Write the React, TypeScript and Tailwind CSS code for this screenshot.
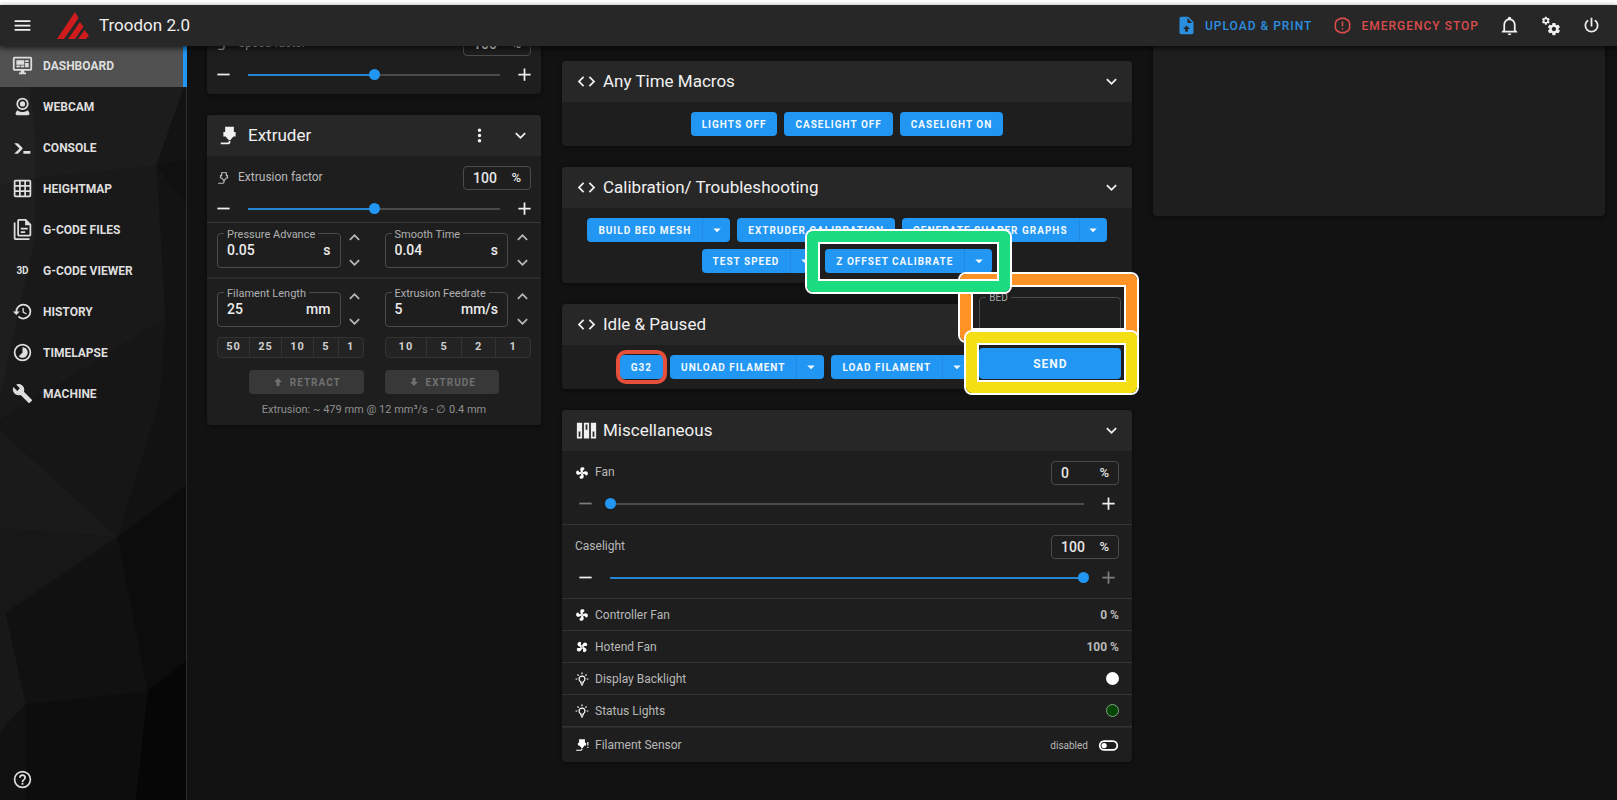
import React, { useState } from 'react';
import clsx from 'clsx';

// Material Design icon outlines, all on a 24x24 grid
const ICONS = {
  menu: 'M3,6H21V8H3V6M3,11H21V13H3V11M3,16H21V18H3V16Z',
  dashboard: 'M21,16V4H3V16H21M21,2A2,2 0 0,1 23,4V16A2,2 0 0,1 21,18H14V20H16V22H8V20H10V18H3C1.89,18 1,17.1 1,16V4C1,2.89 1.89,2 3,2H21M5,6H14V11H5V6M15,6H19V8H15V6M19,9V14H15V9H19M5,12H9V14H5V12M10,12H14V14H10V12Z',
  webcam: 'M12,2A7,7 0 0,1 19,9A7,7 0 0,1 12,16A7,7 0 0,1 5,9A7,7 0 0,1 12,2M12,4A5,5 0 0,0 7,9A5,5 0 0,0 12,14A5,5 0 0,0 17,9A5,5 0 0,0 12,4M12,6A3,3 0 0,1 15,9A3,3 0 0,1 12,12A3,3 0 0,1 9,9A3,3 0 0,1 12,6M6,22A2,2 0 0,1 4,20C4,19.6 4.1,19.3 4.3,19L5.9,16.2C7.6,17.5 9.7,18.2 12,18.2C14.3,18.2 16.4,17.5 18.1,16.2L19.7,19C19.9,19.3 20,19.6 20,20A2,2 0 0,1 18,22H6Z',
  console: 'M13,19V16H21V19H13M8.5,13L2.47,7H6.71L11.67,11.95C12.25,12.54 12.25,13.5 11.67,14.07L6.74,19H2.5L8.5,13Z',
  grid: 'M10,4V8H14V4H10M16,4V8H20V4H16M16,10V14H20V10H16M16,16V20H20V16H16M14,20V16H10V20H14M8,20V16H4V20H8M8,14V10H4V14H8M8,8V4H4V8H8M10,14H14V10H10V14M4,2H20A2,2 0 0,1 22,4V20A2,2 0 0,1 20,22H4C2.92,22 2,21.1 2,20V4A2,2 0 0,1 4,2Z',
  files: 'M16 0H8C6.9 0 6 .9 6 2V18C6 19.1 6.9 20 8 20H20C21.1 20 22 19.1 22 18V6L16 0M20 18H8V2H15V7H20V18M4 4V22H20V24H4C2.9 24 2 23.1 2 22V4H4M10 10V12H18V10H10M10 14V16H15V14H10Z',
  history: 'M13.5,8H12V13L16.28,15.54L17,14.33L13.5,12.25V8M13,3A9,9 0 0,0 4,12H1L4.96,16.03L9,12H6A7,7 0 0,1 13,5A7,7 0 0,1 20,12A7,7 0 0,1 13,19C11.07,19 9.32,18.21 8.06,16.94L6.64,18.36C8.27,20 10.5,21 13,21A9,9 0 0,0 22,12A9,9 0 0,0 13,3',
  timelapse: 'M12,20A8,8 0 0,1 4,12A8,8 0 0,1 12,4A8,8 0 0,1 20,12A8,8 0 0,1 12,20M12,2A10,10 0 0,0 2,12A10,10 0 0,0 12,22A10,10 0 0,0 22,12A10,10 0 0,0 12,2M16.24,7.76C15.07,6.58 13.53,6 12,6V12L7.76,16.24C10.1,18.58 13.9,18.58 16.24,16.24C18.59,13.9 18.59,10.1 16.24,7.76Z',
  wrench: 'M22.7,19L13.6,9.9C14.5,7.6 14,4.9 12.1,3C10.1,1 7.1,0.6 4.7,1.7L9,6L6,9L1.6,4.7C0.4,7.1 0.9,10.1 2.9,12.1C4.8,14 7.5,14.5 9.8,13.6L18.9,22.7C19.3,23.1 19.9,23.1 20.3,22.7L22.6,20.4C23.1,20 23.1,19.3 22.7,19Z',
  help: 'M11,18H13V16H11V18M12,2A10,10 0 0,0 2,12A10,10 0 0,0 12,22A10,10 0 0,0 22,12A10,10 0 0,0 12,2M12,20C7.59,20 4,16.41 4,12C4,7.59 7.59,4 12,4C16.41,4 20,7.59 20,12C20,16.41 16.41,20 12,20M12,6A4,4 0 0,0 8,10H10A2,2 0 0,1 12,8A2,2 0 0,1 14,10C14,12 11,11.75 11,15H13C13,12.75 16,12.5 16,10A4,4 0 0,0 12,6Z',
  upload: 'M14,2H6C4.89,2 4,2.89 4,4V20A2,2 0 0,0 6,22H18C19.11,22 20,21.11 20,20V8L14,2M13.5,16V19H10.5V16H8L12,12L16,16H13.5M13,9V3.5L18.5,9H13Z',
  alert: 'M9,2L3.5,5.2L2,9V15L3.5,18.8L9,22H15L20.5,18.8L22,15V9L20.5,5.2L15,2H9M9.5,4H14.5L18.9,6.6L20,9.5V14.5L18.9,17.4L14.5,20H9.5L5.1,17.4L4,14.5V9.5L5.1,6.6L9.5,4M11,15H13V17H11V15M11,7H13V13H11V7',
  bell: 'M10 21H14C14 22.1 13.1 23 12 23S10 22.1 10 21M21 19V20H3V19L5 17V11C5 7.9 7 5.2 10 4.3V4C10 2.9 10.9 2 12 2S14 2.9 14 4V4.3C17 5.2 19 7.9 19 11V17L21 19M17 11C17 8.2 14.8 6 12 6S7 8.2 7 11V18H17V11Z',
  cogs: 'M15.9,18.45C17.25,18.45 18.35,17.35 18.35,16C18.35,14.65 17.25,13.55 15.9,13.55C14.54,13.55 13.45,14.65 13.45,16C13.45,17.35 14.54,18.45 15.9,18.45M21.1,16.68L22.58,17.84C22.71,17.95 22.75,18.13 22.66,18.29L21.26,20.71C21.17,20.86 21,20.92 20.83,20.86L19.09,20.16C18.73,20.44 18.33,20.67 17.91,20.85L17.64,22.7C17.62,22.87 17.47,23 17.3,23H14.5C14.32,23 14.18,22.87 14.15,22.7L13.89,20.85C13.46,20.67 13.07,20.44 12.71,20.16L10.96,20.86C10.81,20.92 10.62,20.86 10.54,20.71L9.14,18.29C9.05,18.13 9.09,17.95 9.22,17.84L10.7,16.68L10.65,16L10.7,15.31L9.22,14.16C9.09,14.05 9.05,13.86 9.14,13.71L10.54,11.29C10.62,11.13 10.81,11.07 10.96,11.13L12.71,11.84C13.07,11.56 13.46,11.32 13.89,11.15L14.15,9.29C14.18,9.13 14.32,9 14.5,9H17.3C17.47,9 17.62,9.13 17.64,9.29L17.91,11.15C18.33,11.32 18.73,11.56 19.09,11.84L20.83,11.13C21,11.07 21.17,11.13 21.26,11.29L22.66,13.71C22.75,13.86 22.71,14.05 22.58,14.16L21.1,15.31L21.15,16L21.1,16.68M6.69,8.07C7.56,8.07 8.26,7.37 8.26,6.5C8.26,5.63 7.56,4.92 6.69,4.92A1.58,1.58 0 0,0 5.11,6.5C5.11,7.37 5.82,8.07 6.69,8.07M10.03,6.94L11,7.68C11.07,7.75 11.09,7.87 11.03,7.97L10.13,9.53C10.08,9.63 9.96,9.67 9.86,9.63L8.74,9.18L8,9.62L7.81,10.81C7.79,10.92 7.7,11 7.59,11H5.79C5.67,11 5.58,10.92 5.56,10.81L5.4,9.62L4.64,9.18L3.52,9.63C3.41,9.67 3.3,9.63 3.24,9.53L2.34,7.97C2.28,7.87 2.31,7.75 2.39,7.68L3.34,6.94L3.31,6.5L3.34,6.06L2.39,5.32C2.31,5.25 2.28,5.13 2.34,5.03L3.24,3.47C3.3,3.37 3.41,3.33 3.52,3.37L4.63,3.82L5.4,3.38L5.56,2.19C5.58,2.08 5.67,2 5.79,2H7.59C7.7,2 7.79,2.08 7.81,2.19L8,3.38L8.74,3.82L9.86,3.37C9.96,3.33 10.08,3.37 10.13,3.47L11.03,5.03C11.09,5.13 11.07,5.25 11,5.32L10.03,6.06L10.06,6.5L10.03,6.94Z',
  power: 'M16.56,5.44L15.11,6.89C16.84,7.94 18,9.83 18,12A6,6 0 0,1 12,18A6,6 0 0,1 6,12C6,9.83 7.16,7.94 8.88,6.88L7.44,5.44C5.36,6.88 4,9.28 4,12A8,8 0 0,0 12,20A8,8 0 0,0 20,12C20,9.28 18.64,6.88 16.56,5.44M13,3H11V13H13',
  code: 'M14.6,16.6L19.2,12L14.6,7.4L16,6L22,12L16,18L14.6,16.6M9.4,16.6L4.8,12L9.4,7.4L8,6L2,12L8,18L9.4,16.6Z',
  down: 'M7.41,8.58L12,13.17L16.59,8.58L18,10L12,16L6,10L7.41,8.58Z',
  up: 'M7.41,15.41L12,10.83L16.59,15.41L18,14L12,8L6,14L7.41,15.41Z',
  caret: 'M7,10L12,15L17,10H7Z',
  dots: 'M12,16A2,2 0 0,1 14,18A2,2 0 0,1 12,20A2,2 0 0,1 10,18A2,2 0 0,1 12,16M12,10A2,2 0 0,1 14,12A2,2 0 0,1 12,14A2,2 0 0,1 10,12A2,2 0 0,1 12,10M12,4A2,2 0 0,1 14,6A2,2 0 0,1 12,8A2,2 0 0,1 10,6A2,2 0 0,1 12,4Z',
  minus: 'M19,13H5V11H19V13Z',
  plus: 'M19,13H13V19H11V13H5V11H11V5H13V11H19V13Z',
  fan: 'M12,11A1,1 0 0,0 11,12A1,1 0 0,0 12,13A1,1 0 0,0 13,12A1,1 0 0,0 12,11M12.5,2C17,2 17.11,5.57 14.75,6.75C13.76,7.24 13.32,8.29 13.13,9.22C13.61,9.42 14.03,9.73 14.35,10.13C18.05,8.13 22.03,8.92 22.03,12.5C22.03,17 18.46,17.1 17.28,14.73C16.78,13.74 15.72,13.3 14.79,13.11C14.59,13.59 14.28,14 13.88,14.34C15.87,18.03 15.08,22 11.5,22C7,22 6.91,18.42 9.27,17.24C10.25,16.75 10.69,15.71 10.89,14.79C10.4,14.59 9.97,14.27 9.65,13.87C5.96,15.85 2,15.07 2,11.5C2,7 5.56,6.89 6.74,9.26C7.24,10.25 8.29,10.68 9.22,10.87C9.41,10.39 9.73,9.97 10.14,9.65C8.15,5.96 8.94,2 12.5,2Z',
  bulb: 'M20,11H23V13H20V11M1,11H4V13H1V11M13,1V4H11V1H13M4.92,3.5L7.05,5.64L5.63,7.05L3.5,4.93L4.92,3.5M16.95,5.63L19.07,3.5L20.5,4.93L18.37,7.05L16.95,5.63M12,6A6,6 0 0,1 18,12C18,14.22 16.79,16.16 15,17.2V19A1,1 0 0,1 14,20H10A1,1 0 0,1 9,19V17.2C7.21,16.16 6,14.22 6,12A6,6 0 0,1 12,6M14,21V22A1,1 0 0,1 13,23H11A1,1 0 0,1 10,22V21H14M11,18H13V15.87C14.73,15.43 16,13.86 16,12A4,4 0 0,0 12,8A4,4 0 0,0 8,12C8,13.86 9.27,15.43 11,15.87V18Z',
  nozzle: 'M7,2H17V8H19V13H16.5L13,17H11L7.5,13H5V8H7V2M10,22H2V20H10A1,1 0 0,0 11,19V18H13V19A3,3 0 0,1 10,22Z',
  nozzleOutline: 'M9,4H15V9H17V11H15.5L12,15L8.5,11H7V9H9V4M7,2V7H5V13H7.5L11,17V19C11,19.5 10.5,20 10,20H2V22H10A3,3 0 0,0 13,19V17L16.5,13H19V7H17V2H7Z',
  nozzleAlert: 'M7,2H17V8H19V13H16.5L13,17H11L7.5,13H5V8H7V2M10,22H2V20H10A1,1 0 0,0 11,19V18H13V19A3,3 0 0,1 10,22M21,7H23V13H21V7M21,15H23V17H21V15Z',
  dip: 'M1,3H7V21H1V3M3,13V19H5V13H3M9,3H15V21H9V3M11,5V11H13V5H11M17,3H23V21H17V3M19,13V19H21V13H19Z',
  arrowUp: 'M15,20H9V12H4.16L12,4.16L19.84,12H15V20Z',
  arrowDown: 'M9,4H15V12H19.84L12,19.84L4.16,12H9V4Z',
  toggleOff: 'M17,6H7A6,6 0 0,0 1,12A6,6 0 0,0 7,18H17A6,6 0 0,0 23,12A6,6 0 0,0 17,6M17,16H7A4,4 0 0,1 3,12A4,4 0 0,1 7,8H17A4,4 0 0,1 21,12A4,4 0 0,1 17,16M7,9A3,3 0 0,0 4,12A3,3 0 0,0 7,15A3,3 0 0,0 10,12A3,3 0 0,0 7,9Z',
};

type IconName = keyof typeof ICONS;

const Icon: React.FC<{ name: IconName; className?: string }> = ({ name, className }) => (
  <svg viewBox="0 0 24 24" fill="currentColor" fillRule="evenodd" aria-hidden="true"
    className={clsx('shrink-0', className || 'size-[21px]')}>
    <path d={ICONS[name]} />
  </svg>
);

const Logo = () => (
  <svg viewBox="0 0 32 27" className="h-[27px] w-8 shrink-0" fill="#d01c1c" aria-hidden="true">
    <path d="M18 0L0 27H7L21.500 6Z" />
    <path d="M23 10L11 27H18L26.500 14.500Z" />
    <path d="M27.500 18L21 27H29L32 23.500Z" />
  </svg>
);

const NAV: { label: string; icon?: IconName }[] = [
  { label: 'Dashboard', icon: 'dashboard' },
  { label: 'Webcam', icon: 'webcam' },
  { label: 'Console', icon: 'console' },
  { label: 'Heightmap', icon: 'grid' },
  { label: 'G-Code Files', icon: 'files' },
  { label: 'G-Code Viewer' },
  { label: 'History', icon: 'history' },
  { label: 'Timelapse', icon: 'timelapse' },
  { label: 'Machine', icon: 'wrench' },
];

const SidebarBackground = () => (
  <svg viewBox="0 46 187 754" preserveAspectRatio="xMidYMin slice" aria-hidden="true"
    className="absolute inset-0 h-full w-full">
    <rect y="46" width="187" height="754" fill="#191919" />
    <path d="M26 46H187V88L157 165L36 178Z" fill="#1c1c1c" />
    <path d="M0 46H26L36 140V178L0 185Z" fill="#212121" />
    <path d="M0 185L36 178V235L0 400Z" fill="#1e1e1e" />
    <path d="M184 88H187V320H166L157 165Z" fill="#131313" />
    <path d="M157 165L187 160V205Z" fill="#101010" />
    <path d="M187 320V485L118 537L160 400L166 318Z" fill="#121212" />
    <path d="M0 420L166 318L160 400L118 537L0 430Z" fill="#161616" />
    <path d="M0 430L118 537L0 528Z" fill="#1a1a1a" />
    <path d="M0 528L118 537L6 613L0 617Z" fill="#171717" />
    <path d="M6 613L118 537L148 691L26 704Z" fill="#111111" />
    <path d="M118 537L187 485V660L148 691Z" fill="#0c0c0c" />
    <path d="M148 691L187 660V800H136Z" fill="#060606" />
    <path d="M26 704L148 691L136 800H26Z" fill="#0d0d0d" />
    <path d="M0 617L6 613L26 704L0 732Z" fill="#181818" />
    <path d="M0 732L26 704V800H0Z" fill="#111111" />
  </svg>
);

const Sidebar = () => (
  <aside className="relative flex w-[187px] shrink-0 flex-col border-r border-[#2c2c2c]">
    <SidebarBackground />
    <nav className="relative -mr-px flex flex-col">
      {NAV.map((item, idx) => (
        <a key={item.label} href="#"
          className={clsx('flex h-[41px] items-center gap-[10px] pl-3 pb-[2px] text-[12px] font-bold uppercase text-[#dedede]',
            idx === 0 && 'border-r-4 border-[#2196f3] bg-[#515151]')}>
          {item.icon
            ? <Icon name={item.icon} />
            : <span className="w-[21px] text-center text-[10px]">3D</span>}
          {item.label}
        </a>
      ))}
    </nav>
    <button aria-label="Help" className="relative mt-auto ml-3 mb-[10px] self-start text-[#dedede]">
      <Icon name="help" />
    </button>
  </aside>
);

const Header = () => (
  <header className="relative z-40 flex h-[41px] items-center bg-[#272727] pl-3 pr-[15px] shadow-[0_2px_6px_rgba(0,0,0,0.7)]">
    <button aria-label="Menu"><Icon name="menu" /></button>
    <span className="ml-6"><Logo /></span>
    <h1 className="ml-[10px] text-[17px]">Troodon 2.0</h1>
    <div className="ml-auto flex items-center gap-5">
      <button className="flex items-center gap-2 text-[12px] font-medium uppercase tracking-[1px] text-[#2b8fe0]">
        <Icon name="upload" />Upload &amp; Print
      </button>
      <button className="flex items-center gap-2 text-[12px] font-medium uppercase tracking-[1px] text-[#d94c4c]">
        <Icon name="alert" className="size-[21px] p-px" />Emergency Stop
      </button>
      <button aria-label="Notifications"><Icon name="bell" /></button>
      <button aria-label="Settings"><Icon name="cogs" /></button>
      <button aria-label="Power"><Icon name="power" /></button>
    </div>
  </header>
);

const Panel: React.FC<{ icon: IconName; title: string; menu?: boolean; narrow?: boolean; children: React.ReactNode }> =
  ({ icon, title, menu, narrow, children }) => (
    <section className="rounded bg-[#1e1e1e] shadow-[0_1px_4px_rgba(0,0,0,0.5)]">
      <div className={clsx('flex h-[41px] items-center rounded-t bg-[#272727] pr-[10px]', narrow ? 'gap-2 pl-3' : 'gap-[6px] pl-[14px]')}>
        <Icon name={icon} />
        <h2 className="text-[17px]">{title}</h2>
        <div className="ml-auto flex gap-5">
          {menu && <button aria-label={`${title} menu`}><Icon name="dots" /></button>}
          <button aria-label={`Collapse ${title}`}><Icon name="down" /></button>
        </div>
      </div>
      {children}
    </section>
  );

const PercentInput: React.FC<{ label: string; value: number; onChange: (v: number) => void }> = ({ label, value, onChange }) => (
  <div className="flex h-6 w-[68px] items-center rounded border border-[#4b4b4b] px-[9px] text-[14px] font-medium text-[#e6e6e6]">
    <input aria-label={label} value={value} onChange={e => onChange(Number(e.target.value) || 0)}
      className="w-full min-w-0 bg-transparent outline-none" />
    <span className="text-[13px]">%</span>
  </div>
);

const SliderControl: React.FC<{ label: string; icon?: IconName; initial: number; max?: number; narrow?: boolean }> =
  ({ label, icon, initial, max = 100, narrow }) => {
    const [value, setValue] = useState(initial);
    const percent = Math.min(100, (value / max) * 100);

    return (
      <div>
        <div className={clsx('flex items-center text-[12px] text-[#b8b8b8]', narrow ? 'gap-[7px] px-1' : 'gap-[6px]')}>
          {icon && <Icon name={icon} className={narrow ? 'size-[14px]' : 'size-[14px] text-white'} />}
          <span className="mr-auto pb-[3px]">{label}</span>
          <PercentInput label={label} value={value} onChange={setValue} />
        </div>
        <div className="mt-2 flex items-center gap-[14px]">
          <button aria-label={`Decrease ${label}`} disabled={value <= 0} onClick={() => setValue(value - 1)} className="disabled:text-[#7d7d7d]">
            <Icon name="minus" />
          </button>
          <div className="relative flex h-[21px] flex-1 items-center">
            <div className="h-[2px] w-full bg-[#4a4a4a]">
              <div className="h-[2px] bg-[#2585d4]" style={{ width: `${percent}%` }} />
            </div>
            <input type="range" aria-label={`${label} slider`} min={0} max={max} value={value}
              onChange={e => setValue(Number(e.target.value))}
              className="absolute -left-[5px] h-[21px] w-[calc(100%+10px)] cursor-pointer appearance-none bg-transparent [&::-webkit-slider-thumb]:size-[11px] [&::-webkit-slider-thumb]:appearance-none [&::-webkit-slider-thumb]:rounded-full [&::-webkit-slider-thumb]:bg-[#2196f3]" />
          </div>
          <button aria-label={`Increase ${label}`} disabled={value >= max} onClick={() => setValue(value + 1)} className="disabled:text-[#7d7d7d]">
            <Icon name="plus" />
          </button>
        </div>
      </div>
    );
  };

const NumberField: React.FC<{ id: string; label: string; value: string; unit: string }> = ({ id, label, value, unit }) => (
  <div className="flex items-center gap-[5px]">
    <div className="relative flex h-[35px] min-w-0 flex-1 items-center rounded border border-[#4b4b4b] px-[9px] text-[14px] font-medium text-[#ececec]">
      <label htmlFor={id} className="absolute -top-[7px] left-[6px] bg-[#1e1e1e] px-[3px] text-[11px] font-normal leading-[15px] whitespace-nowrap text-[#b0b0b0]">{label}</label>
      <input id={id} defaultValue={value} className="w-full min-w-0 bg-transparent outline-none" />
      <span>{unit}</span>
    </div>
    <div className="flex w-[18px] flex-col items-center gap-1 text-[#b8b8b8]">
      <button aria-label={`Increase ${label}`}><Icon name="up" /></button>
      <button aria-label={`Decrease ${label}`}><Icon name="down" /></button>
    </div>
  </div>
);

const Presets: React.FC<{ values: number[] }> = ({ values }) => (
  <div className="flex h-[21px] divide-x divide-[#333] rounded border border-[#333] bg-[#232323] text-[11px] font-bold tracking-[1px] text-[#cfcfcf]">
    {values.map(v => <button key={v} className="flex-auto px-2">{v}</button>)}
  </div>
);

const MacroButton: React.FC<{ label: string; split?: boolean; children?: React.ReactNode }> = ({ label, split, children }) => (
  <div className="relative flex h-6 text-[10px] font-bold tracking-[1px] text-[#f2f9ff]">
    <button className={clsx('bg-[#2196f3] px-[11px] uppercase whitespace-nowrap', split ? 'rounded-l border-r border-[#1f8ae0]' : 'rounded')}>{label}</button>
    {split && (
      <button aria-label={`${label} parameters`} className="flex w-[27px] items-center justify-center rounded-r bg-[#2196f3]">
        <Icon name="caret" className="size-[18px]" />
      </button>
    )}
    {children}
  </div>
);

// Coloured marker with a white edge inside and out
const Marker: React.FC<{ className: string }> = ({ className }) => (
  <div className={clsx('pointer-events-none absolute rounded-md border-[11px] ring-2 ring-white', className)}>
    <div className="h-full w-full border-2 border-white" />
  </div>
);

const ParameterMenu = () => (
  <>
    <div className="absolute left-[147px] top-[31px] z-20 flex w-[156px] flex-col gap-[17px] rounded bg-[#1e1e1e] px-[7px] pt-[17px] pb-3">
      <div className="relative h-[34px] rounded border border-[#4b4b4b]">
        <label htmlFor="bed" className="absolute -top-[7px] left-[6px] bg-[#1e1e1e] px-[3px] text-[10px] font-normal leading-[14px] tracking-normal text-[#a8a8a8]">BED</label>
        <input id="bed" className="h-full w-full bg-transparent px-2 outline-none" />
      </div>
      <button className="h-[31px] rounded bg-[#2196f3] text-[12px] font-bold uppercase tracking-[1px]">Send</button>
    </div>
    <Marker className="left-[135px] top-[25px] z-20 h-[67px] w-[177px] border-[#ff9326]" />
    <Marker className="-inset-x-[18px] -top-[18px] z-30 h-[61px] border-[#1bdd80]" />
    <Marker className="left-[141px] top-[83px] z-30 h-[61px] w-[171px] border-[#f4df14]" />
  </>
);

const ExtruderPanel = () => (
  <Panel icon="nozzle" title="Extruder" menu narrow>
    <div className="border-b border-[#383838] px-[6px] pt-[10px] pb-[3px]">
      <SliderControl label="Extrusion factor" icon="nozzleOutline" initial={100} max={200} narrow />
    </div>
    <div className="grid grid-cols-2 gap-x-[21px] border-b-2 border-[#2b2b2b] px-[10px] py-1">
      <NumberField id="pressure-advance" label="Pressure Advance" value="0.05" unit="s" />
      <NumberField id="smooth-time" label="Smooth Time" value="0.04" unit="s" />
    </div>
    <div className="grid grid-cols-2 gap-x-[21px] px-[10px] pt-[7px]">
      <NumberField id="filament-length" label="Filament Length" value="25" unit="mm" />
      <NumberField id="extrusion-feedrate" label="Extrusion Feedrate" value="5" unit="mm/s" />
    </div>
    <div className="grid grid-cols-2 gap-x-[21px] px-[10px] pt-[5px]">
      <Presets values={[50, 25, 10, 5, 1]} />
      <Presets values={[10, 5, 2, 1]} />
    </div>
    <div className="mt-3 grid grid-cols-2 gap-[21px] px-[42px] text-[10px] font-bold tracking-[1px] text-[#707070]">
      <button disabled className="flex h-6 items-center justify-center gap-[6px] rounded bg-[#383838] uppercase">
        <Icon name="arrowUp" className="size-3" />Retract
      </button>
      <button disabled className="flex h-6 items-center justify-center gap-[6px] rounded bg-[#383838] uppercase">
        <Icon name="arrowDown" className="size-3" />Extrude
      </button>
    </div>
    <p className="pt-2 pb-[7px] text-center text-[11px] leading-4 text-[#8f8f8f]">Extrusion: ~ 479 mm @ 12 mm³/s - ∅ 0.4 mm</p>
  </Panel>
);

const MiscRow: React.FC<{ icon: IconName; label: string; turned?: boolean; last?: boolean; children: React.ReactNode }> =
  ({ icon, label, turned, last, children }) => (
    <div className={clsx('flex items-center gap-[6px] px-[13px] text-[12px] text-[#b8b8b8]',
      last ? 'h-[35px] border-t border-[#2b2b2b]' : 'h-8 border-b border-[#343434]')}>
      <Icon name={icon} className={clsx('size-[14px] text-white', turned && 'rotate-45')} />
      <span className="mr-auto">{label}</span>
      {children}
    </div>
  );

const MiscPanel = () => (
  <Panel icon="dip" title="Miscellaneous">
    <div className="border-b border-[#343434] px-[13px] py-[10px]">
      <SliderControl label="Fan" icon="fan" initial={0} />
    </div>
    <div className="border-b border-[#343434] px-[13px] py-[10px]">
      <SliderControl label="Caselight" initial={100} />
    </div>
    <MiscRow icon="fan" label="Controller Fan"><b>0 %</b></MiscRow>
    <MiscRow icon="fan" label="Hotend Fan" turned><b>100 %</b></MiscRow>
    <MiscRow icon="bulb" label="Display Backlight">
      <button aria-label="Display Backlight colour" className="size-[13px] rounded-full bg-white" />
    </MiscRow>
    <MiscRow icon="bulb" label="Status Lights">
      <button aria-label="Status Lights colour" className="size-[13px] rounded-full border border-[#7fa583] bg-[#034503]" />
    </MiscRow>
    <MiscRow icon="nozzleAlert" label="Filament Sensor" last>
      <span className="text-[10px]">disabled</span>
      <button role="switch" aria-checked="false" aria-label="Filament Sensor" className="ml-1 text-white">
        <Icon name="toggleOff" />
      </button>
    </MiscRow>
  </Panel>
);

const App: React.FC = () => (
  <div className="flex min-h-screen flex-col bg-[#121212] font-['Roboto',sans-serif] text-[#f0f0f0]">
    <div className="relative z-40 h-[5px] bg-white" />
    <Header />
    <div className="flex flex-1">
      <Sidebar />
      <main className="grid flex-1 grid-cols-[334fr_570fr_452fr] items-start gap-[21px] pl-5 pr-3 pt-[15px] pb-9">
        {/* Scrolled partly under the header */}
        <div className="-mt-[39px] flex flex-col gap-[21px]">
          <section className="rounded bg-[#1e1e1e] px-[6px] pt-[10px] pb-[9px] shadow-[0_1px_4px_rgba(0,0,0,0.5)]">
            <SliderControl label="Speed factor" icon="nozzleOutline" initial={100} max={200} narrow />
          </section>
          <ExtruderPanel />
        </div>

        <div className="flex flex-col gap-[21px]">
          <Panel icon="code" title="Any Time Macros">
            <div className="flex flex-wrap justify-center gap-[7px] p-[10px]">
              <MacroButton label="Lights Off" />
              <MacroButton label="Caselight Off" />
              <MacroButton label="Caselight On" />
            </div>
          </Panel>

          <Panel icon="code" title="Calibration/ Troubleshooting">
            <div className="flex flex-wrap justify-center gap-[7px] p-[10px]">
              <MacroButton label="Build Bed Mesh" split />
              <MacroButton label="Extruder Calibration" />
              <MacroButton label="Generate Shaper Graphs" split />
              <MacroButton label="Test Speed" split />
              <MacroButton label="Z Offset Calibrate" split>
                <ParameterMenu />
              </MacroButton>
            </div>
          </Panel>

          <Panel icon="code" title="Idle & Paused">
            <div className="flex justify-center gap-[7px] p-[10px] pr-[114px]">
              <MacroButton label="G32">
                <div className="pointer-events-none absolute -inset-x-1 -inset-y-[5px] rounded-[10px] border-4 border-[#e6503a]" />
              </MacroButton>
              <MacroButton label="Unload Filament" split />
              <MacroButton label="Load Filament" split />
            </div>
          </Panel>

          <MiscPanel />
        </div>

        <section className="-mt-6 h-[179px] rounded bg-[#1e1e1e] shadow-[0_1px_4px_rgba(0,0,0,0.5)]" />
      </main>
    </div>
  </div>
);

export default App;
